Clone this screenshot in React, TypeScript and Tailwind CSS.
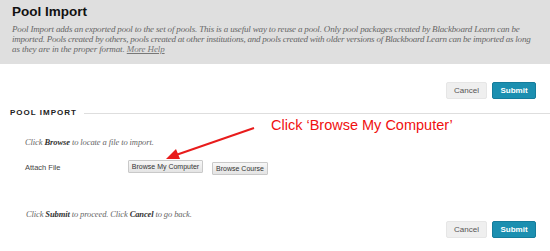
import React from 'react';

const serif = { fontFamily: '"Liberation Serif", "DejaVu Serif", serif' };
const sans = { fontFamily: '"Liberation Sans", Arial, sans-serif' };

const GrayButton: React.FC<{ label: string; className?: string }> = ({ label, className = '' }) => (
  <button
    className={`h-[17px] rounded-[2px] bg-[#efefef] text-[8px] text-[#555] border border-[#e6e6e6] ${className}`}
    style={sans}
  >
    {label}
  </button>
);

const SubmitButton: React.FC = () => (
  <button
    className="h-[17px] w-[44px] rounded-[2px] bg-[#1b8fb0] border border-[#157c9b] text-[8px] font-bold text-white"
    style={sans}
  >
    Submit
  </button>
);

const FileButton: React.FC<{ label: string; className?: string }> = ({ label, className = '' }) => (
  <button
    className={`h-[13px] px-0 whitespace-nowrap rounded-[1px] border border-[#c9c9c9] bg-gradient-to-b from-[#f7f7f7] to-[#e4e4e4] text-[7px] leading-none text-[#333] ${className}`}
    style={sans}
  >
    {label}
  </button>
);

export default function App() {
  return (
    <div className="relative w-[550px] h-[251px] overflow-hidden bg-white">
      {/* page header */}
      <header className="h-[64px] bg-[#dfdfdf] px-[12px] pt-[4px]">
        <h1 className="text-[13.5px] leading-[16px] font-bold text-[#111]" style={sans}>Pool Import</h1>
        <div className="mt-[4px] text-[9px] leading-[10px] italic text-[#666]" style={serif}>
          <p className="whitespace-nowrap tracking-[-0.17px]">
            Pool Import adds an exported pool to the set of pools. This is a useful way to reuse a pool. Only pool packages created by Blackboard Learn can be
          </p>
          <p className="whitespace-nowrap tracking-[-0.23px]">
            imported. Pools created by others, pools created at other institutions, and pools created with older versions of Blackboard Learn can be imported as long
          </p>
          <p className="whitespace-nowrap tracking-[-0.12px]">
            as they are in the proper format. <span className="underline text-[#777]">More Help</span>
          </p>
        </div>
      </header>

      <div className="flex justify-end gap-[5px] pr-[14px] pt-[18px]">
        <GrayButton label="Cancel" className="w-[41px]" />
        <SubmitButton />
      </div>

      {/* section */}
      <div className="mt-[7px] flex items-center h-[14px] pl-[10px]">
        <span className="text-[8px] font-bold tracking-[1px] text-[#222]" style={sans}>POOL IMPORT</span>
        <div className="ml-[7px] flex-1 h-px bg-[#dedede]" />
      </div>

      <div className="pl-[25px]">
        <p className="mt-[17px] text-[8.5px] leading-[11px] italic text-[#666] tracking-[-0.1px]" style={serif}>
          Click <span className="font-bold text-[#333]">Browse</span> to locate a file to import.
        </p>
        <div className="mt-[12px] flex items-start">
          <span className="w-[103px] pt-[2px] text-[7.5px] text-[#444]" style={sans}>Attach File</span>
          <FileButton label="Browse My Computer" className="w-[75px]" />
          <FileButton label="Browse Course" className="ml-[9px] mt-[2px] w-[56px]" />
        </div>
      </div>

      <div className="mt-[34px] flex items-start justify-between pl-[26px] pr-[14px]">
        <p className="text-[8.5px] leading-[11px] italic text-[#666] tracking-[-0.12px]" style={serif}>
          Click <span className="font-bold text-[#333]">Submit</span> to proceed. Click <span className="font-bold text-[#333]">Cancel</span> to go back.
        </p>
        <div className="mt-[12px] flex gap-[5px]">
          <GrayButton label="Cancel" className="w-[41px]" />
          <SubmitButton />
        </div>
      </div>

      {/* annotation overlay */}
      <span className="absolute left-[271px] top-[117px] text-[14.5px] leading-[17px] text-[#f01010] whitespace-nowrap" style={sans}>
        Click ‘Browse My Computer’
      </span>
      <svg className="absolute left-0 top-0" width="550" height="251" viewBox="0 0 550 251">
        <line x1="254" y1="128" x2="176" y2="155" stroke="#e81c1c" strokeWidth="2" />
        <polygon points="166,159 176,149 180,159" fill="#e81c1c" />
      </svg>
    </div>
  );
}
